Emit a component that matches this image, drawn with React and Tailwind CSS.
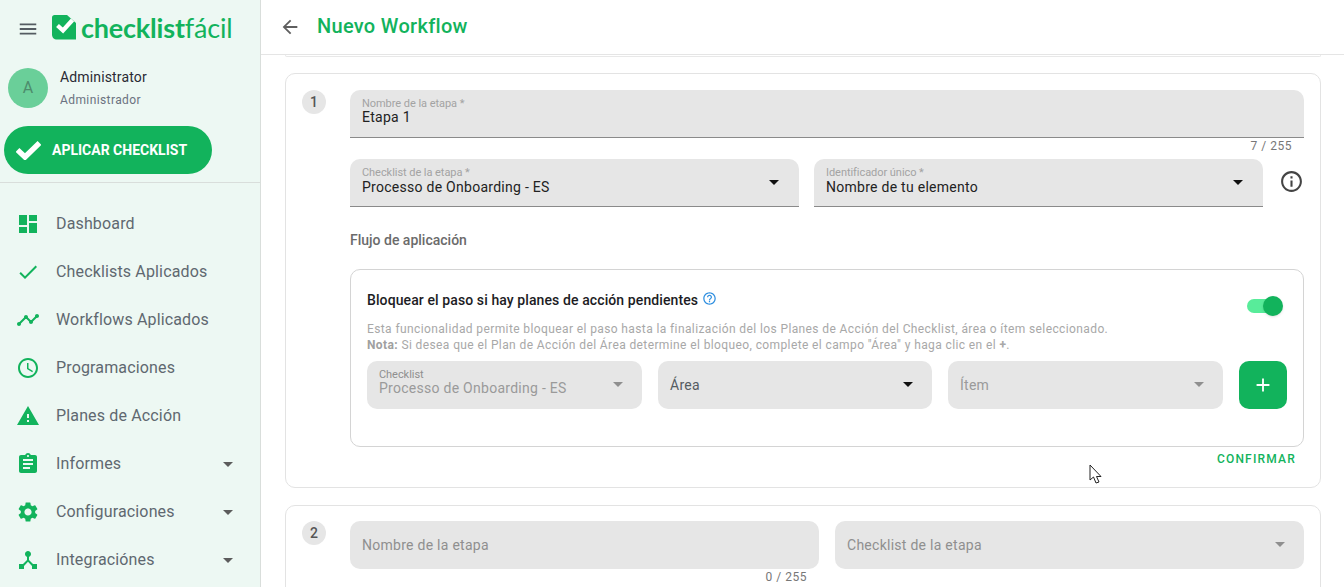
import React from "react";
import {
  MdMenu,
  MdArrowBack,
  MdDashboard,
  MdCheck,
  MdTimeline,
  MdAccessTime,
  MdWarning,
  MdAssignment,
  MdSettings,
  MdDeviceHub,
  MdArrowDropDown,
  MdInfoOutline,
  MdHelpOutline,
  MdAdd,
} from "react-icons/md";

const NAV_ITEMS = [
  { label: "Dashboard", icon: MdDashboard },
  { label: "Checklists Aplicados", icon: MdCheck },
  { label: "Workflows Aplicados", icon: MdTimeline },
  { label: "Programaciones", icon: MdAccessTime },
  { label: "Planes de Acción", icon: MdWarning },
  { label: "Informes", icon: MdAssignment, caret: true },
  { label: "Configuraciones", icon: MdSettings, caret: true },
  { label: "Integraciónes", icon: MdDeviceHub, caret: true },
];

const Logo = () => (
  <div className="flex items-center">
    <svg width="25" height="25" viewBox="0 0 25 25" className="shrink-0">
      <path d="M0 2.5C0 1 1 0 2.5 0H15L24 8V24.5H5C2 24.5 0 22.5 0 19.5Z" fill="#12b35c" />
      <path d="M5.5 10.5L11 15.5L20.5 5" fill="none" stroke="#fff" strokeWidth="4.2" />
    </svg>
    <span className="ml-[4px] text-[27px] leading-none tracking-[-0.2px] text-[#12b35c] font-['Lato',sans-serif] font-bold">
      checklist
      <span className="font-normal">fácil</span>
    </span>
  </div>
);

const Sidebar = () => (
  <aside className="w-[261px] shrink-0 h-full border-r border-[#d9dedb] bg-[#edf8f3] overflow-hidden">
    <div className="h-[55px] flex items-center pl-[18px] pt-[3px]">
      <MdMenu className="text-[#555c62] -ml-[1px]" size={22} />
      <div className="-mt-[4px] ml-[13px]">
        <Logo />
      </div>
    </div>
    <div className="flex items-start pl-[8px] pt-[13px] h-[58px]">
      <div className="w-[40px] h-[40px] rounded-full bg-[#6acf99] flex items-center justify-center text-[#4d8c6c] text-[16px]">
        A
      </div>
      <div className="ml-[12px] -mt-[1px]">
        <div className="text-[14px] leading-[20px] tracking-[0.15px] text-[#2a2a33]">Administrator</div>
        <div className="text-[12px] leading-[20px] mt-[3px] tracking-[0.4px] text-[#6b7280]">Administrador</div>
      </div>
    </div>
    <div className="pl-[4px] mt-[13px]">
      <div className="w-[208px] h-[48px] rounded-full bg-[#12b35c] flex items-center pl-[12px] text-white">
        <svg width="25" height="20" viewBox="0 0 25 20">
          <path d="M1.5 10L9 17L23.5 3" fill="none" stroke="#fff" strokeWidth="5.5" />
        </svg>
        <span className="ml-[11px] text-[14px] font-bold">APLICAR CHECKLIST</span>
      </div>
    </div>
    <div className="border-b border-[#d9dedb] h-[9px]" />
    <nav className="mt-[17px]">
      {NAV_ITEMS.map((item) => (
        <div key={item.label} className="h-[48px] flex items-center pl-[16px] pr-[20px]">
          <item.icon size={24} className="text-[#12b35c] shrink-0" />
          <span className="ml-[16px] text-[16px] tracking-[0.15px] text-[#5f6870]">{item.label}</span>
          {item.caret && <MdArrowDropDown size={24} className="ml-auto text-[#5c5c5c]" />}
        </div>
      ))}
    </nav>
  </aside>
);

// caja gris de los formularios
const Field = ({ label, value, muted, select, underline, className = "" }) => (
  <div
    className={`relative h-[48px] bg-[#e6e6e6] px-[12px] flex flex-col ${label ? "pt-[8px]" : "justify-center"} ${
      underline ? "rounded-t-[10px] border-b border-[#8a8a8a]" : "rounded-[10px]"
    } ${className}`}
  >
    {label && (
      <div className={`text-[11px] leading-[12px] tracking-[-0.05px] ${muted ? "text-[#8f8f8f]" : "text-[#a3a3a3]"}`}>
        {label}
      </div>
    )}
    {value.text && (
      <div className={`text-[14px] leading-[15px] tracking-[0.27px] ${value.className}`}>{value.text}</div>
    )}
    {select && (
      <MdArrowDropDown
        size={24}
        className={`absolute top-[11px] ${underline ? "right-[13px]" : "right-[12px]"} ${
          select === "dark" ? "text-[#111]" : "text-[#8f8f8f]"
        }`}
      />
    )}
  </div>
);

const StepBadge = ({ n }) => (
  <div className="w-[24px] h-[24px] rounded-full bg-[#e6e6e6] flex items-center justify-center text-[14px] font-medium text-[#555]">
    {n}
  </div>
);

const BlockPanel = () => (
  <div className="mt-[20px] h-[178px] border border-[#d4d4d4] rounded-[10px] pl-[16px] pr-[16px] pt-[20px]">
    <div className="flex items-start justify-between h-[31px]">
      <div className="flex items-center text-[14px] font-medium tracking-[0.1px] text-[#1c1c24] leading-[20px]">
        Bloquear el paso si hay planes de acción pendientes
        <MdHelpOutline size={15} className="ml-[4px] -mt-[3px] text-[#2f8fe0]" />
      </div>
      <div className="relative w-[36px] h-[20px] mr-[4px] mt-[6px]">
        <div className="absolute left-0 top-[3px] w-[34px] h-[14px] rounded-full bg-[#58ec9a]" />
        <div className="absolute right-0 top-0 w-[20px] h-[20px] rounded-full bg-[#12b35c] shadow-sm" />
      </div>
    </div>
    <p className="text-[12px] leading-[16px] tracking-[0.39px] text-[#a8a8a8]">
      Esta funcionalidad permite bloquear el paso hasta la finalización del los Planes de Acción del Checklist, área o
      ítem seleccionado.
      <br />
      <b className="font-bold text-[#a0a0a0]">Nota:</b> Si desea que el Plan de Acción del Área determine el bloqueo,
      complete el campo "Área" y haga clic en el <b className="font-bold">+</b>.
    </p>
    <div className="flex mt-[8px] gap-[16px]">
      <Field
        className="w-[275px]"
        label="Checklist"
        muted
        select="light"
        value={{ text: "Processo de Onboarding - ES", className: "text-[#9a9a9a]" }}
      />
      <Field className="w-[274px]" select="dark" value={{ text: "Área", className: "text-[#555c62]" }} />
      <Field className="w-[275px]" select="light" value={{ text: "Ítem", className: "text-[#9a9a9a]" }} />
      <div className="w-[48px] h-[48px] rounded-[10px] bg-[#12b35c] flex items-center justify-center text-white">
        <MdAdd size={22} />
      </div>
    </div>
  </div>
);

const CursorArrow = () => (
  <svg width="14" height="21" viewBox="0 0 14 21" className="absolute left-[1089px] top-[464px]">
    <path
      d="M1 1V16L4.5 13L7 19L10 18L7.5 12.5H12Z"
      fill="#fff"
      stroke="#222"
      strokeWidth="1"
      strokeLinejoin="round"
    />
  </svg>
);

const App = () => {
  return (
    <div className="relative w-[1344px] h-[587px] overflow-hidden flex bg-white font-['Roboto',sans-serif]">
      <Sidebar />
      <main className="flex-1 min-w-0 h-full overflow-hidden">
        <header className="h-[55px] flex items-center pl-[18px] border-b border-[#e5e5e5]">
          <MdArrowBack size={22} className="text-[#5f5f5f] -mt-[1px]" />
          <h1 className="ml-[16px] -mt-[2px] text-[20px] font-medium tracking-[0.3px] text-[#12b35c]">
            Nuevo Workflow
          </h1>
        </header>
        <div className="pl-[24px] pr-[23px]">
          <div className="h-[2px] border-b border-x border-[#e8e8e8] rounded-b-[4px]" />
          <section className="mt-[16px] h-[415px] border border-[#e3e3e3] rounded-[10px] pl-[16px] pr-[16px] pt-[16px] flex">
            <StepBadge n={1} />
            <div className="ml-[24px] flex-1 min-w-0">
              <Field
                underline
                label="Nombre de la etapa *"
                value={{ text: "Etapa 1", className: "text-[#222]" }}
              />
              <div className="h-[21px] pt-[1px] pr-[12px] text-right text-[12px] leading-[14px] tracking-[0.5px] text-[#777]">
                7 / 255
              </div>
              <div className="flex items-center">
                <Field
                  className="w-[449px]"
                  underline
                  select="dark"
                  label="Checklist de la etapa *"
                  value={{ text: "Processo de Onboarding - ES", className: "text-[#222] pt-[1px]" }}
                />
                <Field
                  className="w-[449px] ml-[15px]"
                  underline
                  select="dark"
                  label="Identificador único *"
                  value={{ text: "Nombre de tu elemento", className: "text-[#222] pt-[1px]" }}
                />
                <MdInfoOutline size={25} className="ml-[16px] -mt-[3px] text-[#444]" />
              </div>
              <div className="mt-[24px] text-[14px] leading-[18px] font-medium text-[#6b6b6b]">
                Flujo de aplicación
              </div>
              <BlockPanel />
              <div className="mt-[5px] pr-[8px] text-right text-[12px] leading-[14px] font-medium tracking-[1.2px] text-[#12b35c]">
                CONFIRMAR
              </div>
            </div>
          </section>
          <section className="mt-[17px] h-[120px] border border-[#e3e3e3] rounded-[10px] pl-[16px] pr-[16px] pt-[15px] flex">
            <StepBadge n={2} />
            <div className="ml-[24px] flex-1 min-w-0">
              <div className="flex gap-[16px]">
                <div className="w-[469px]">
                  <Field value={{ text: "Nombre de la etapa", className: "text-[#8f8f8f] pt-[1px]" }} />
                  <div className="pt-[1px] pr-[12px] text-right text-[12px] leading-[14px] tracking-[0.5px] text-[#777]">
                    0 / 255
                  </div>
                </div>
                <Field
                  className="w-[469px]"
                  select="light"
                  value={{ text: "Checklist de la etapa", className: "text-[#8f8f8f] pt-[1px]" }}
                />
              </div>
            </div>
          </section>
        </div>
      </main>
      <CursorArrow />
    </div>
  );
};

export default App;
